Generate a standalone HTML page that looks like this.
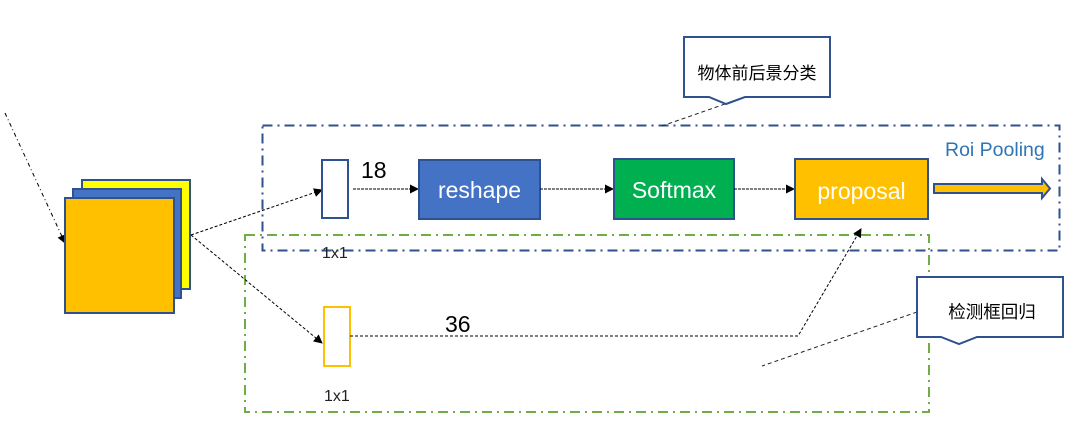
<!DOCTYPE html>
<html><head><meta charset="utf-8"><style>
html,body{margin:0;padding:0;background:#fff;}
svg{display:block;}
text{font-family:"Liberation Sans","Noto Sans CJK SC",sans-serif;}
</style></head><body>
<svg width="1081" height="436" viewBox="0 0 1081 436" xmlns="http://www.w3.org/2000/svg">
<defs>
<marker id="ar" markerWidth="9" markerHeight="9" refX="8" refY="4.5" orient="auto" markerUnits="userSpaceOnUse">
<path d="M0,0 L9,4.5 L0,9 z" fill="#000"/></marker>
</defs>
<rect x="262.5" y="125.5" width="797" height="125" fill="none" stroke="#2F528F" stroke-width="2" stroke-dasharray="10,5,2,5"/>
<rect x="245" y="235" width="684" height="177" fill="none" stroke="#70AD47" stroke-width="2" stroke-dasharray="10,5,2,5"/>
<line x1="5" y1="113" x2="65" y2="243" stroke="#000" stroke-width="1" stroke-dasharray="4,3,1,3" marker-end="url(#ar)"/>
<rect x="82" y="180" width="108" height="109" fill="#FFFF00" stroke="#2F528F" stroke-width="2"/>
<rect x="73" y="189" width="108" height="109" fill="#4472C4" stroke="#2F528F" stroke-width="2"/>
<rect x="65" y="198" width="109" height="115" fill="#FFC000" stroke="#2F528F" stroke-width="2"/>
<line x1="191" y1="235" x2="322" y2="190" stroke="#000" stroke-width="1" stroke-dasharray="3,2" marker-end="url(#ar)"/>
<line x1="191" y1="235" x2="322" y2="343" stroke="#000" stroke-width="1" stroke-dasharray="3,2" marker-end="url(#ar)"/>
<rect x="322" y="160" width="26" height="58" fill="#fff" stroke="#2F528F" stroke-width="2"/>
<rect x="324" y="307" width="26" height="59" fill="#fff" stroke="#FFC000" stroke-width="2"/>
<text x="361" y="178" font-size="23" fill="#000">18</text>
<text x="322" y="258" font-size="16" fill="#222">1x1</text>
<text x="324" y="401" font-size="16" fill="#222">1x1</text>
<text x="445" y="332" font-size="23" fill="#000">36</text>
<line x1="353" y1="189" x2="418" y2="189" stroke="#000" stroke-dasharray="3,1" marker-end="url(#ar)"/>
<rect x="419" y="160" width="121" height="59" fill="#4472C4" stroke="#2F528F" stroke-width="2"/>
<text x="479.5" y="198" font-size="23" fill="#fff" text-anchor="middle">reshape</text>
<line x1="540" y1="189" x2="613" y2="189" stroke="#000" stroke-dasharray="3,1" marker-end="url(#ar)"/>
<rect x="614" y="159" width="120" height="60" fill="#00B050" stroke="#2F528F" stroke-width="2"/>
<text x="674" y="198" font-size="23" fill="#fff" text-anchor="middle">Softmax</text>
<line x1="734" y1="189" x2="794" y2="189" stroke="#000" stroke-dasharray="3,1" marker-end="url(#ar)"/>
<rect x="795" y="159" width="133" height="60" fill="#FFC000" stroke="#2F528F" stroke-width="2"/>
<text x="861.5" y="199" font-size="23" fill="#fff" text-anchor="middle">proposal</text>
<path d="M934,184 L1042,184 L1042,179 L1050,188.5 L1042,198 L1042,193 L934,193 z" fill="#FFC000" stroke="#2F528F" stroke-width="2"/>
<text x="945" y="156" font-size="19.5" fill="#2E75B6">Roi Pooling</text>
<polyline points="350,336 798,336 861,229" fill="none" stroke="#000" stroke-dasharray="3,2" marker-end="url(#ar)"/>
<line x1="725" y1="104" x2="662" y2="126" stroke="#222" stroke-dasharray="4,3"/>
<path d="M684,37 L830,37 L830,97 L745,97 L726,104 L709,97 L684,97 z" fill="#fff" stroke="#2F528F" stroke-width="2"/>
<text x="757" y="79" font-size="17" fill="#000" text-anchor="middle">物体前后景分类</text>
<line x1="917" y1="312" x2="762" y2="366" stroke="#222" stroke-dasharray="4,3"/>
<path d="M917,277 L1063,277 L1063,337 L977,337 L959,344 L941,337 L917,337 z" fill="#fff" stroke="#2F528F" stroke-width="2"/>
<text x="992" y="318" font-size="17.5" fill="#000" text-anchor="middle">检测框回归</text>
</svg>
</body></html>
